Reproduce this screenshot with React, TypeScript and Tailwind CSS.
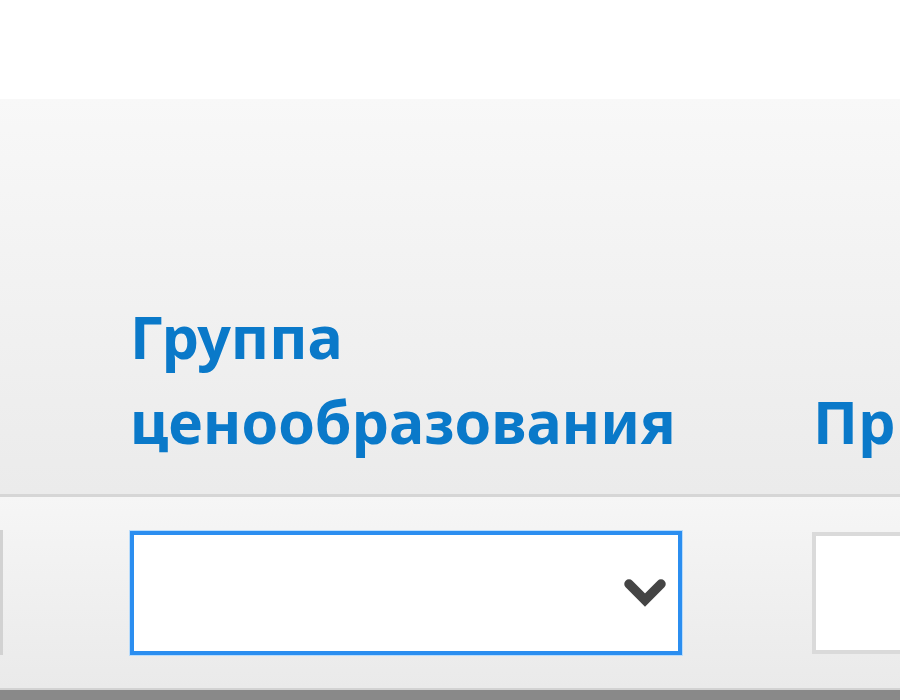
const headFont = { fontFamily: '"Noto Sans", "Open Sans", sans-serif' };

function Chevron() {
  return (
    <svg width="44" height="32" viewBox="0 0 44 32" fill="none" aria-hidden="true">
      <polyline
        points="6,7 22,23 38,7"
        stroke="#444444"
        strokeWidth="9.5"
        strokeLinecap="round"
        strokeLinejoin="miter"
      />
    </svg>
  );
}

export default function App() {
  return (
    <div className="h-[700px] w-[900px] overflow-hidden bg-white">
      <div className="h-[99px] bg-white" />

      {/* header row */}
      <div className="flex h-[395px] items-end overflow-hidden bg-gradient-to-b from-[#f8f8f8] to-[#ebebeb] pb-[30px]">
        <div className="w-[66px] shrink-0" />
        <div className="w-[680px] shrink-0 pl-[64px]">
          <div
            className="text-[59px] font-bold leading-[85px] text-[#0a79c9]"
            style={headFont}
          >
            Группа
            <br />
            ценообразования
          </div>
        </div>
        <div className="shrink-0 pl-[67px]">
          <div
            className="whitespace-nowrap text-[59px] font-bold leading-[85px] text-[#0a79c9]"
            style={headFont}
          >
            Пр
          </div>
        </div>
      </div>

      <div className="h-[3px] bg-[#d6d6d6]" />

      {/* filter row */}
      <div className="flex h-[191px] items-center bg-gradient-to-b from-[#f6f6f6] to-[#eaeaea]">
        <div className="w-[66px] shrink-0 pr-[63px]">
          <div className="ml-[-197px] h-[125px] w-[200px] border-4 border-[#d2d2d2] bg-white" />
        </div>
        <div className="w-[680px] shrink-0 pl-[64px] pr-[64px]">
          <div className="flex h-[124px] w-[552px] items-center justify-end border-4 border-[#2b8ef0] bg-white pr-[11px] shadow-[0_0_0_1px_#b9dcfb]">
            <Chevron />
          </div>
        </div>
        <div className="shrink-0 pl-[66px]">
          <div className="h-[122px] w-[200px] border-4 border-[#dadada] bg-white" />
        </div>
      </div>

      <div className="h-[2px] bg-[#d2d2d2]" />
      <div className="h-[10px] bg-[#898989]" />
    </div>
  );
}
